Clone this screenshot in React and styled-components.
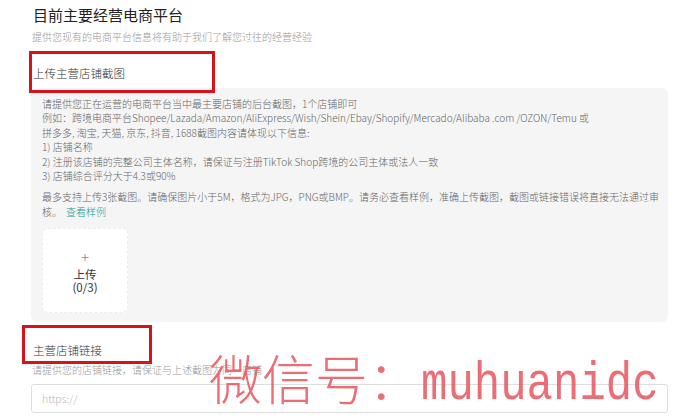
import React from 'react'
import styled, { createGlobalStyle } from 'styled-components'

const GlobalStyle = createGlobalStyle`
  html, body {
    margin: 0;
    padding: 0;
    background: #fff;
  }
  body {
    font-family: "Noto Sans CJK SC", "Liberation Sans", sans-serif;
    color: #333;
  }
`

const Page = styled.div`
  position: relative;
  width: 680px;
  height: 419px;
  overflow: hidden;
  padding: 5px 12px 0 31px;
  box-sizing: border-box;
`

const Title = styled.h1`
  margin: 0 0 5px 2px;
  font-size: 15px;
  line-height: 20px;
  font-weight: 400;
  color: #222;
`

const Hint = styled.p`
  margin: ${props => props.margin || '0'};
  padding-left: 1px;
  font-size: 10px;
  line-height: 14px;
  font-weight: 300;
  color: #999;
`

const Label = styled.div`
  margin: ${props => props.margin};
  padding-left: 2px;
  font-size: 11.5px;
  line-height: 16px;
  font-weight: 300;
  color: #333;
`

const Panel = styled.div`
  background: #f5f5f5;
  border-radius: 6px;
  padding: 9px 11px 9px 11px;
`

const Para = styled.div`
  font-size: 10px;
  line-height: 14.4px;
  font-weight: 300;
  color: #666;
  margin-bottom: ${props => props.gap || 0}px;
`

const Line = styled.div`
  white-space: nowrap;
`

const Link = styled.a`
  color: #159c9a;
  margin-left: 4px;
  text-decoration: none;
`

const UploadBox = styled.div`
  margin-top: 9px;
  width: 86px;
  height: 85px;
  background: #fff;
  border: 1px dashed #ececec;
  border-radius: 6px;
  box-sizing: border-box;
  display: flex;
  flex-direction: column;
  align-items: center;
  justify-content: center;
  padding-top: 2px;
`

const Plus = styled.div`
  font-size: 15px;
  line-height: 14px;
  font-weight: 300;
  color: #888;
  margin-bottom: 4px;
`

const UploadText = styled.div`
  font-size: 11.5px;
  line-height: 13px;
  color: #333;
`

const Input = styled.div`
  margin-top: 7px;
  height: 29px;
  border: 1px solid #dedede;
  border-radius: 3px;
  box-sizing: border-box;
  display: flex;
  align-items: center;
  padding-left: 10px;
  font-size: 10.5px;
  font-weight: 300;
  color: #b8b8b8;
`

const Mark = styled.div`
  position: absolute;
  left: ${props => props.x}px;
  top: ${props => props.y}px;
  width: ${props => props.w}px;
  height: ${props => props.h}px;
  border: 3px solid #d8121a;
  box-sizing: border-box;
  pointer-events: none;
`

const Watermark = styled.div`
  position: absolute;
  left: 209px;
  top: 347px;
  white-space: nowrap;
  color: rgba(232, 84, 94, 0.85);
  pointer-events: none;
  display: flex;
  align-items: baseline;
`

const WaterCjk = styled.span`
  font-family: "Noto Sans CJK SC", sans-serif;
  font-size: 53px;
  font-weight: 200;
  line-height: 60px;
`

const WaterLatin = styled.span`
  display: inline-block;
  font-family: "Liberation Mono", monospace;
  font-size: 44px;
  line-height: 60px;
  transform: scaleY(1.2);
  transform-origin: 50% 78%;
`

export default function App() {
  return (
    <>
      <GlobalStyle />
      <Page>
        <Title>目前主要经营电商平台</Title>
        <Hint>提供您现有的电商平台信息将有助于我们了解您过往的经营经验</Hint>
        <Label margin="21px 0 7px">上传主营店铺截图</Label>
        <Panel>
          <Para gap={7}>
            <Line>请提供您正在运营的电商平台当中最主要店铺的后台截图，1个店铺即可</Line>
            <Line>例如：跨境电商平台Shopee/Lazada/Amazon/AliExpress/Wish/Shein/Ebay/Shopify/Mercado/Alibaba .com /OZON/Temu 或</Line>
            <Line>拼多多, 淘宝, 天猫, 京东, 抖音, 1688截图内容请体现以下信息:</Line>
            <Line>1) 店铺名称</Line>
            <Line>2) 注册该店铺的完整公司主体名称，请保证与注册TikTok Shop跨境的公司主体或法人一致</Line>
            <Line>3) 店铺综合评分大于4.3或90%</Line>
          </Para>
          <Para>
            <Line>最多支持上传3张截图。请确保图片小于5M，格式为JPG，PNG或BMP。请务必查看样例，准确上传截图，截图或链接错误将直接无法通过审</Line>
            <Line>
              核。<Link href="#">查看样例</Link>
            </Line>
          </Para>
          <UploadBox>
            <Plus>+</Plus>
            <UploadText>上传</UploadText>
            <UploadText>(0/3)</UploadText>
          </UploadBox>
        </Panel>
        <Label margin="20px 0 5px">主营店铺链接</Label>
        <Hint>请提供您的店铺链接，请保证与上述截图为同一店铺</Hint>
        <Input>https://</Input>
        <Mark x={29} y={51} w={186} h={42} />
        <Mark x={22} y={325} w={130} h={39} />
        <Watermark>
          <WaterCjk>微信号：</WaterCjk>
          <WaterLatin>muhuanidc</WaterLatin>
        </Watermark>
      </Page>
    </>
  )
}
